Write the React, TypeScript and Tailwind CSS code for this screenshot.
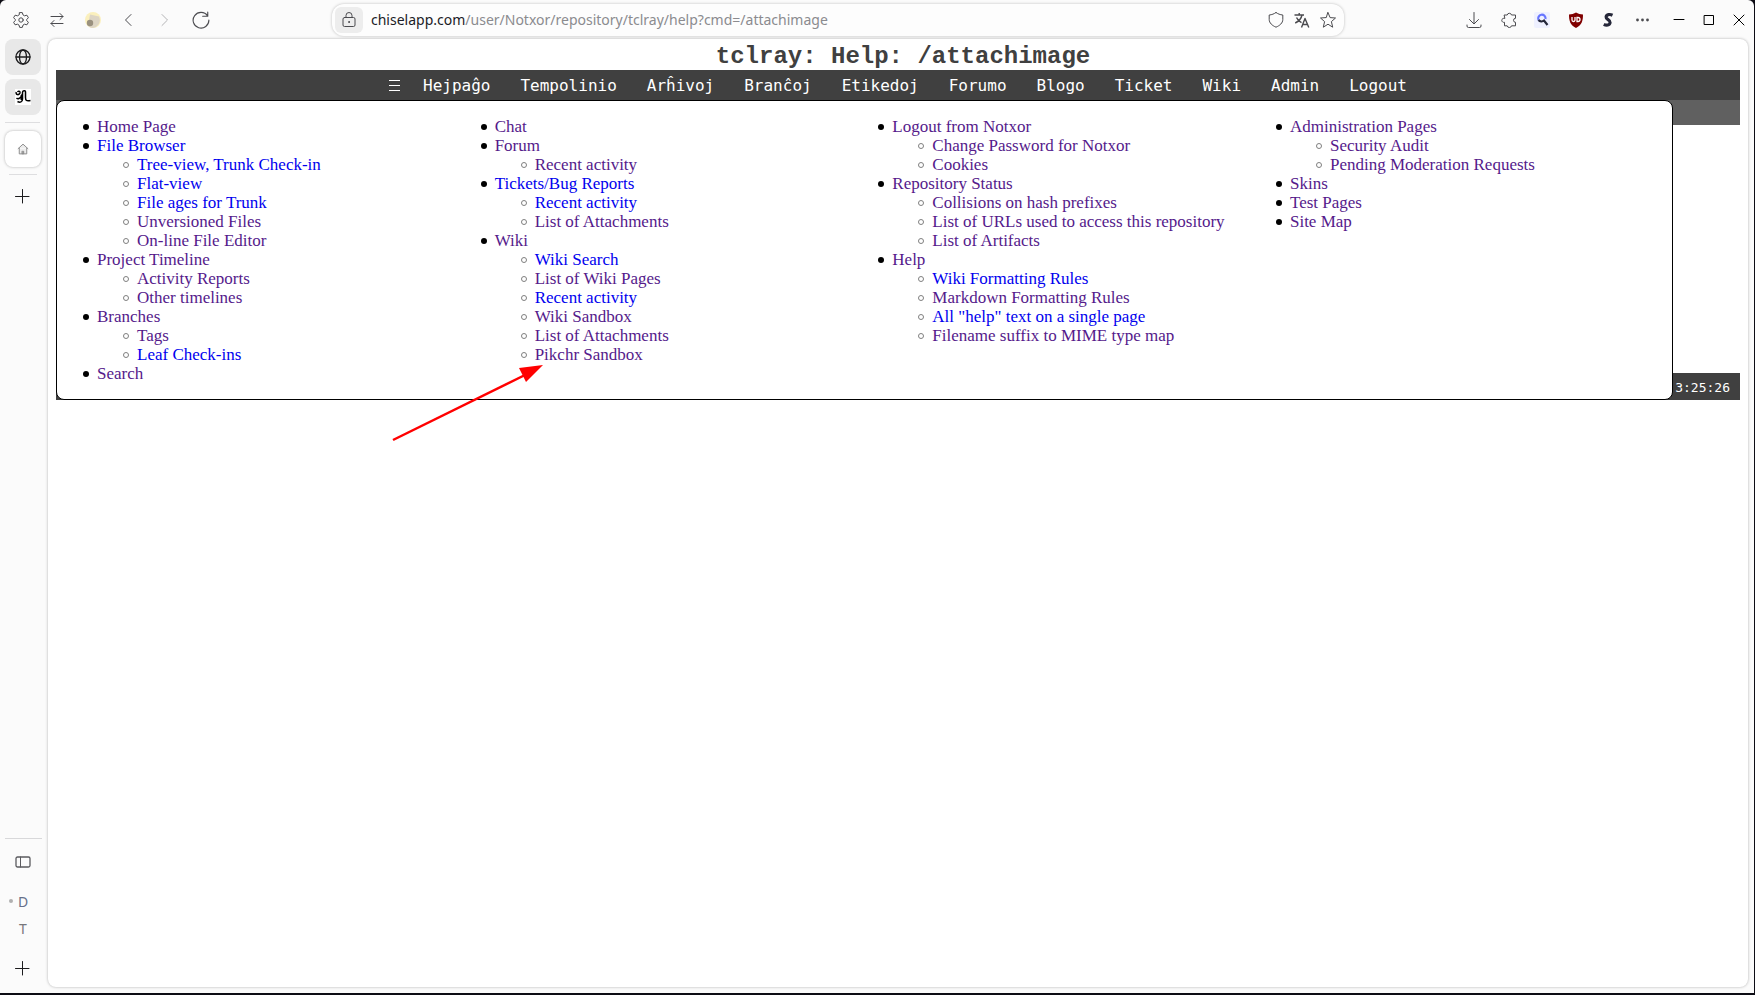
import React from "react";

interface MenuLink {
  label: string;
  fresh?: boolean;
  children?: MenuLink[];
}

// "fresh" links are not visited yet, so they are blue
const siteMap: MenuLink[][] = [
  [
    { label: "Home Page" },
    {
      label: "File Browser",
      fresh: true,
      children: [
        { label: "Tree-view, Trunk Check-in", fresh: true },
        { label: "Flat-view", fresh: true },
        { label: "File ages for Trunk", fresh: true },
        { label: "Unversioned Files" },
        { label: "On-line File Editor" },
      ],
    },
    {
      label: "Project Timeline",
      children: [{ label: "Activity Reports" }, { label: "Other timelines" }],
    },
    {
      label: "Branches",
      children: [{ label: "Tags" }, { label: "Leaf Check-ins", fresh: true }],
    },
    { label: "Search" },
  ],
  [
    { label: "Chat" },
    { label: "Forum", children: [{ label: "Recent activity" }] },
    {
      label: "Tickets/Bug Reports",
      fresh: true,
      children: [
        { label: "Recent activity", fresh: true },
        { label: "List of Attachments" },
      ],
    },
    {
      label: "Wiki",
      children: [
        { label: "Wiki Search", fresh: true },
        { label: "List of Wiki Pages" },
        { label: "Recent activity", fresh: true },
        { label: "Wiki Sandbox" },
        { label: "List of Attachments" },
        { label: "Pikchr Sandbox" },
      ],
    },
  ],
  [
    {
      label: "Logout from Notxor",
      children: [{ label: "Change Password for Notxor" }, { label: "Cookies" }],
    },
    {
      label: "Repository Status",
      children: [
        { label: "Collisions on hash prefixes" },
        { label: "List of URLs used to access this repository" },
        { label: "List of Artifacts" },
      ],
    },
    {
      label: "Help",
      children: [
        { label: "Wiki Formatting Rules", fresh: true },
        { label: "Markdown Formatting Rules" },
        { label: 'All "help" text on a single page', fresh: true },
        { label: "Filename suffix to MIME type map" },
      ],
    },
  ],
  [
    {
      label: "Administration Pages",
      children: [
        { label: "Security Audit" },
        { label: "Pending Moderation Requests" },
      ],
    },
    { label: "Skins" },
    { label: "Test Pages" },
    { label: "Site Map" },
  ],
];

const navItems = [
  "Hejpaĝo",
  "Tempolinio",
  "Arĥivoj",
  "Branĉoj",
  "Etikedoj",
  "Forumo",
  "Blogo",
  "Ticket",
  "Wiki",
  "Admin",
  "Logout",
];

interface IconProps {
  children: React.ReactNode;
  className?: string;
}

const Icon: React.FC<IconProps> = ({ children, className = "size-4" }) => (
  <svg
    viewBox="0 0 16 16"
    className={className}
    fill="none"
    stroke="currentColor"
    strokeLinecap="round"
    strokeLinejoin="round"
    aria-hidden="true"
  >
    {children}
  </svg>
);

interface ButtonProps {
  label: string;
  className: string;
  children: React.ReactNode;
}

const IconButton: React.FC<ButtonProps> = ({ label, className, children }) => (
  <button
    type="button"
    aria-label={label}
    className={`flex shrink-0 items-center justify-center ${className}`}
  >
    {children}
  </button>
);

const Plus = () => (
  <Icon className="size-4 text-[#1c1c1e]">
    <path d="M.5 7.500h13.500M7.500 .5v13.500" />
  </Icon>
);

const Toolbar = () => (
  <header className="flex h-[39px] shrink-0 items-center pl-[3px] text-[#4b4b4f]">
    <IconButton label="Settings" className="h-8 w-9">
      <Icon>
        <path d="M6.700 .6h2.600l.7 2.300 1.500.9 2.400-.6 1.500 2.500L13.700 7.500v1l1.700 1.800-1.500 2.500-2.400-.6-1.500.9-.7 2.300H6.700L6 13.100l-1.500-.9-2.400.6L.6 10.300l1.700-1.800v-1L.6 5.700l1.500-2.500 2.400.6L6 2.900z" />
        <circle cx="8" cy="8" r="2.200" />
      </Icon>
    </IconButton>
    <IconButton label="Switch" className="h-8 w-9">
      <Icon>
        <path d="M2 4.500h12M11 1.500l3 3-3 3M14 11.500H2M5 8.500l-3 3 3 3" />
      </Icon>
    </IconButton>
    <IconButton label="Cookies" className="h-8 w-9">
      <svg viewBox="0 0 16 16" className="size-4" aria-hidden="true">
        <circle cx="8" cy="8" r="8" fill="#fbf0bd" />
        <path d="M5 2.500l9 2a8 8 0 0 1-7 11.500 8 8 0 0 1-4-2z" fill="#ddd5c4" />
        <circle cx="5" cy="11" r="3.200" fill="#9a917f" />
      </svg>
    </IconButton>
    <IconButton label="Back" className="h-8 w-9">
      <Icon>
        <path d="M10 2.500L4.500 8l5.500 5.500" />
      </Icon>
    </IconButton>
    <IconButton label="Forward" className="h-8 w-9 text-[#b4b4b6]">
      <Icon>
        <path d="M5 2.500L10.500 8l-5.500 5.500" />
      </Icon>
    </IconButton>
    <IconButton label="Reload" className="h-8 w-9">
      <Icon className="size-[18px]">
        <path d="M13.800 4.300A7 7 0 1 0 15 8M14 1v3.700h-4.500" />
      </Icon>
    </IconButton>

    <div className="mx-[113px] flex h-8 min-w-0 flex-1 items-center rounded-xl bg-[#fdfdfd] pr-[3px] pl-[3px] shadow-[0_0_3px_rgba(0,0,0,0.25)]">
      <IconButton label="Site information" className="h-[26px] w-7 rounded-md bg-[#ededed]">
        <Icon>
          <rect x="2" y="5.500" width="12" height="9" rx="1.500" />
          <path d="M5 5.500V3.500a3 3 0 0 1 6 0v2" />
          <circle cx="8" cy="10" r=".5" fill="currentColor" />
        </Icon>
      </IconButton>
      <a
        href="#address"
        className="ml-2 min-w-0 flex-1 truncate font-['Noto_Sans',sans-serif] text-[14px] leading-6 text-[#8b8b8f]"
      >
        <span className="text-[#1b1b26]">chiselapp.com</span>
        /user/Notxor/repository/tclray/help?cmd=/attachimage
      </a>
      <IconButton label="Protection" className="h-7 w-[26px]">
        <Icon>
          <path d="M8 .5c2 1.500 4 2.200 6.800 2.500v4.500c0 3.500-3 6-6.800 7.700C4.200 13.500 1.200 11 1.200 7.500V3C4 2.700 6 2 8 .5z" />
        </Icon>
      </IconButton>
      <IconButton label="Translate" className="h-7 w-[26px]">
        <Icon>
          <path
            strokeWidth="1.400"
            strokeLinecap="butt"
            d="M.5 3h9.500M5.200 1v2M8 3c-.7 3.500-3.500 6.500-6.800 8M2.500 5.500c1 2.500 3 4 5 5.200M7.500 15.500l3.500-9 3.800 9M8.700 12.500h4.800"
          />
        </Icon>
      </IconButton>
      <IconButton label="Bookmark" className="h-7 w-[26px]">
        <Icon>
          <path d="M8 .6l2.100 5 5.400.4-4.100 3.600 1.300 5.600L8 12.200l-4.700 3 1.300-5.600L.5 6l5.400-.4z" />
        </Icon>
      </IconButton>
    </div>

    <IconButton label="Downloads" className="h-8 w-[34px]">
      <Icon>
        <path d="M8 .5v11M3.500 7.500L8 12l4.500-4.500M1 13v1q0 1.500 1.500 1.500h11q1.500 0 1.500-1.500v-1" />
      </Icon>
    </IconButton>
    <IconButton label="Extensions" className="h-8 w-[34px]">
      <Icon>
        <path d="M4.500 3h2.700a2.200 2.200 0 0 1 4.300 0H15.500v3.300a2 2 0 0 0 0 4v3.500h-4a2.200 2.200 0 0 1-4.300 0H4.500v-3.500a2.100 2.100 0 1 1 0-4z" />
      </Icon>
    </IconButton>
    <IconButton label="Search tool" className="h-8 w-[34px]">
      <svg viewBox="0 0 16 16" className="size-4" fill="none" aria-hidden="true">
        <rect width="16" height="16" rx="2" fill="#eef0ff" />
        <path d="M4.500 8A3.700 3.700 0 1 1 11.500 7" stroke="#6675ff" strokeWidth="2.200" />
        <path d="M4.500 8A4 4 0 0 0 10 8.500l3.500 4.500" stroke="#23263a" strokeWidth="2.200" />
      </svg>
    </IconButton>
    <IconButton label="Ad blocker" className="h-8 w-[34px]">
      <svg viewBox="0 0 16 16" className="size-4" fill="none" aria-hidden="true">
        <path d="M8 .5c2 1.300 4.500 2 7 2 0 6-1 10.500-7 13.500C2 13 1 8.500 1 2.500c2.500 0 5-.7 7-2z" fill="#800000" />
        <path d="M4 5v3a1.500 1.500 0 0 0 3 0V5M9 5.500v4h1a2 2 0 0 0 0-4z" stroke="#fff" strokeWidth="1.300" />
      </svg>
    </IconButton>
    <IconButton label="Styles" className="h-8 w-[34px]">
      <svg viewBox="0 0 16 16" className="size-4" fill="none" aria-hidden="true">
        <path
          d="M10.500 3.200C8 2 4.500 2.300 4.100 4.900 3.800 7.600 8.500 7.700 8.100 10.600c-.4 2.700-3.800 3-6.300 1.700"
          stroke="#26283a"
          strokeWidth="3.200"
        />
      </svg>
    </IconButton>
    <IconButton label="More" className="h-8 w-[34px]">
      <Icon>
        <g fill="currentColor" stroke="none">
          <circle cx="1.500" cy="8" r="1.400" />
          <circle cx="6.500" cy="8" r="1.400" />
          <circle cx="11.500" cy="8" r="1.400" />
        </g>
      </Icon>
    </IconButton>
    <div className="ml-[3px] flex text-black">
      <IconButton label="Minimize" className="h-8 w-[30px]">
        <Icon>
          <path d="M3 7.500h10" />
        </Icon>
      </IconButton>
      <IconButton label="Maximize" className="h-8 w-[30px]">
        <Icon>
          <path d="M3.500 3.500h9v9h-9z" />
        </Icon>
      </IconButton>
      <IconButton label="Close" className="h-8 w-[30px]">
        <Icon>
          <path d="M3 3l10 10M13 3L3 13" />
        </Icon>
      </IconButton>
    </div>
  </header>
);

const Sidebar = () => (
  <aside className="flex w-12 shrink-0 flex-col pl-[5px] font-['Noto_Sans',sans-serif] text-[14px] text-[#77777b]">
    <IconButton label="Web" className="size-9 rounded-lg bg-[#e8e8e8] text-[#1c1c1e]">
      <Icon>
        <g strokeWidth="1.300">
          <circle cx="8" cy="8" r="7" />
          <ellipse cx="8" cy="8" rx="3.500" ry="7" />
          <path d="M1 8h14" />
        </g>
      </Icon>
    </IconButton>
    <IconButton label="Pinned page" className="mt-1 size-9 rounded-lg bg-[#e8e8e8]">
      <svg viewBox="0 0 16 16" className="size-4" fill="none" stroke="#000" aria-hidden="true">
        <path d="M0 0h16v16H0z" fill="#fff" stroke="none" />
        <path
          strokeWidth="1.500"
          d="M1.200 3C.5 6 4 6.500 5 4c.5-2-2-2.500-2.300-.8M1.500 9c1.500 1.500 3.500 .5 4.500-1.500l.8-2M2.500 12.500c2.500 1.500 5 .5 5-2.500V3.500c0-2 3-2.500 3-.5v5.500c0 3 1 4 5 3M6.300 6v5"
        />
      </svg>
    </IconButton>
    <hr className="mt-[7px] mr-2 border-[#dedee0]" />
    <IconButton
      label="Home"
      className="mt-2 size-9 rounded-lg bg-white text-[#8c8c8c] shadow-[0_0_3px_rgba(0,0,0,0.3)]"
    >
      <Icon className="size-3">
        <path d="M1.500 7.500L8 1.500l6.500 6M3 7v7.500h10V7" fill="#ececec" strokeWidth="1.300" />
        <path d="M7 11h2v3.500H7z" fill="currentColor" />
      </Icon>
    </IconButton>
    <hr className="mt-[7px] mr-[11px] ml-1 border-[#dedee0]" />
    <IconButton label="New tab" className="mt-1 size-9">
      <Plus />
    </IconButton>

    <hr className="mt-auto mr-[6px] border-[#d8d8da]" />
    <IconButton label="Toggle sidebar" className="mt-[5px] size-9 text-[#5b5b5f]">
      <Icon>
        <rect x="1" y="3" width="14" height="10" rx="1.500" strokeWidth="1.300" />
        <path d="M5.500 3v10" />
      </Icon>
    </IconButton>
    <button type="button" className="relative mt-2 h-[27px] w-9 text-[#66708a]">
      <span className="absolute top-[11px] left-1 size-1 rounded-full bg-[#b0b0b0]" />D
    </button>
    <button type="button" className="h-[27px] w-9">
      T
    </button>
    <IconButton label="New workspace" className="mt-[9px] mb-[6px] size-9">
      <Plus />
    </IconButton>
  </aside>
);

const markers = [
  "before:mr-2 before:-ml-[14px] before:inline-block before:size-[6px] before:rounded-full before:bg-black before:align-[2px]",
  "before:mr-2 before:-ml-[14px] before:inline-block before:size-[6px] before:rounded-full before:border before:border-[#808080] before:align-[2px]",
];

const LinkList: React.FC<{ links: MenuLink[]; depth?: number }> = ({
  links,
  depth = 0,
}) => (
  <ul className="pl-10">
    {links.map((link) => (
      <li key={link.label} className={markers[depth]}>
        <a href="#link" className={link.fresh ? "text-[#0000ee]" : "text-[#551a8b]"}>
          {link.label}
        </a>
        {link.children && <LinkList links={link.children} depth={1} />}
      </li>
    ))}
  </ul>
);

const SiteMenu = () => (
  <div className="absolute top-0 left-0 grid w-[96%] grid-cols-4 gap-x-4 rounded-lg border border-black bg-white py-4 pr-10 font-['Liberation_Serif',serif] text-[17px] leading-[19px] whitespace-nowrap text-black">
    {siteMap.map((column) => (
      <LinkList key={column[0].label} links={column} />
    ))}
  </div>
);

const Arrow = () => (
  <svg
    viewBox="0 0 154 78"
    className="pointer-events-none absolute top-[326px] left-[343px] h-[78px] w-[154px]"
    aria-hidden="true"
  >
    <path d="M2 75L134 10" stroke="#ff0000" strokeWidth="2.500" />
    <path d="M152 0l-24 3 7 14z" fill="#ff0000" />
  </svg>
);

const App = () => (
  <div className="flex h-screen flex-col bg-[#0d0c14] pr-px pb-[2px]">
    <div className="flex min-h-0 flex-1 flex-col rounded-t-md bg-[#fbfbfb]">
      <Toolbar />
      <div className="flex min-h-0 flex-1">
        <Sidebar />
        <main className="relative mr-[6px] mb-[6px] min-w-0 flex-1 rounded-lg bg-white px-2 font-['DejaVu_Sans_Mono',monospace] shadow-[0_0_3px_rgba(0,0,0,0.3)]">
          <h1 className="h-[31px] pt-[2px] pl-[10px] text-center font-['Liberation_Mono',monospace] text-[24px] leading-8 font-bold text-[#404040]">
            tclray: Help: /attachimage
          </h1>
          <nav className="flex h-[30px] items-center justify-center gap-[30px] bg-[#404040] pt-[2px] text-[16px] leading-5 text-white">
            <button type="button" aria-label="Site menu" className="-mr-2">
              <svg viewBox="0 0 12 12" className="size-3" stroke="currentColor" aria-hidden="true">
                <path d="M0 .5h11M0 5.500h11M0 10.500h11" />
              </svg>
            </button>
            {navItems.map((item) => (
              <a key={item} href="#nav">
                {item}
              </a>
            ))}
          </nav>
          <div className="relative">
            <div className="h-[25px] bg-[#606060]" />
            <div className="h-[248px]" />
            <footer className="h-[27px] bg-[#404040] pr-[10px] text-right text-[13px] leading-[29px] text-white">
              3:25:26
            </footer>
            <SiteMenu />
          </div>
          <Arrow />
        </main>
      </div>
    </div>
  </div>
);

export default App;
